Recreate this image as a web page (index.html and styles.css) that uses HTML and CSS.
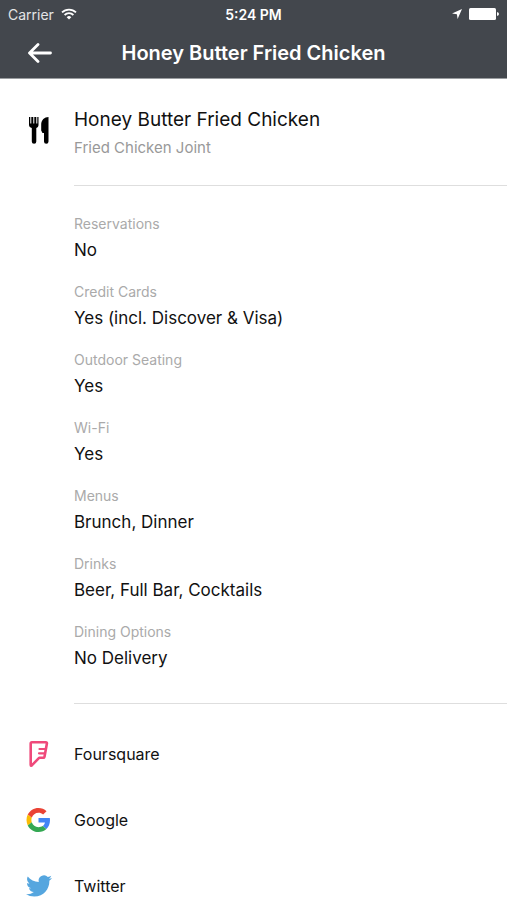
FILE: index.html
```html
<!DOCTYPE html>
<html lang="en">
<head>
<meta charset="utf-8">
<meta name="viewport" content="width=device-width, initial-scale=1">
<title>Honey Butter Fried Chicken</title>
<link rel="stylesheet" href="styles.css">
</head>
<body>
<header class="top">
  <div class="status">
    <div class="status-left">
      <span>Carrier</span>
      <svg width="16" height="12" viewBox="0 0 16 12" fill="none" stroke="#fff" stroke-width="1.8"><path d="M1 4.4a10 10 0 0 1 14 0M3.6 7a6.300 6.300 0 0 1 8.800 0"/><path d="M8 11.500 5.700 9.200a3.300 3.300 0 0 1 4.600 0z" fill="#fff" stroke="none"/></svg>
    </div>
    <span class="time">5:24 PM</span>
    <div class="status-right">
      <svg width="10" height="10" viewBox="0 0 10 10" fill="#fff"><path d="M10 0 5.600 10 4.900 5.200 0 4.400z"/></svg>
      <svg width="30" height="12" viewBox="0 0 30 12" fill="#fff"><rect width="27" height="12" rx="1.500"/><path d="M28 4q2 .3 2 2t-2 2z"/></svg>
    </div>
  </div>
  <div class="nav">
    <button class="back" type="button" aria-label="Back">
      <svg width="24" height="20" viewBox="0 0 24 20" fill="none" stroke="#fff" stroke-width="2.800" stroke-linecap="round" stroke-linejoin="round"><path d="M10 1.500 1.500 10l8.500 8.500M2 10h20.500"/></svg>
    </button>
    <h1>Honey Butter Fried Chicken</h1>
  </div>
</header>
<main>
  <section class="venue">
    <svg class="icon" width="26" height="28" viewBox="0 0 26 28" fill="#000"><path d="M3 1h1.300v6.500h1V1h2v6.500h1V1h2v6.500h1V1h1.200v8c0 1.500-.9 2.500-2.200 3V25.500a2 2 0 0 1-4.500 0V12C4.200 11.500 3 10.500 3 9z"/><path d="M22.500 1v24.500a2.200 2.200 0 0 1-4.500 0V17h-1.500L15.200 14.500V8.500C15.200 4 18.500 1 22.500 1z"/></svg>
    <div>
      <h2>Honey Butter Fried Chicken</h2>
      <p class="kind">Fried Chicken Joint</p>
    </div>
  </section>
  <dl class="facts">
    <div><dt>Reservations</dt><dd>No</dd></div>
    <div><dt>Credit Cards</dt><dd>Yes (incl. Discover &amp; Visa)</dd></div>
    <div><dt>Outdoor Seating</dt><dd>Yes</dd></div>
    <div><dt>Wi-Fi</dt><dd>Yes</dd></div>
    <div><dt>Menus</dt><dd>Brunch, Dinner</dd></div>
    <div><dt>Drinks</dt><dd>Beer, Full Bar, Cocktails</dd></div>
    <div><dt>Dining Options</dt><dd>No Delivery</dd></div>
  </dl>
  <nav class="links" aria-label="Services">
    <a href="#foursquare">
      <svg class="icon" width="26" height="26" viewBox="0 0 26 26" fill="none" stroke="#ef4a7b" stroke-width="2.600" stroke-linejoin="round" stroke-linecap="round"><path d="M5.800 1.300h14q1.300 0 1.100 1.200l-2.400 13.200q-.2 1.100-1.300 1.100h-4.100L6 24.200q-1.300 1.200-1.300-.4V2.400q0-1.100 1.100-1.100z"/><path d="M19.500 8H13.500M18.500 12.300h-5.500" stroke-width="2.200"/></svg>
      <span>Foursquare</span>
    </a>
    <a href="#google">
      <svg class="icon" width="26" height="26" viewBox="-1 -2 52 52"><path fill="#EA4335" d="M24 9.500c3.540 0 6.710 1.220 9.210 3.600l6.850-6.850C35.900 2.380 30.470 0 24 0 14.620 0 6.510 5.380 2.560 13.220l7.980 6.190C12.430 13.720 17.740 9.500 24 9.500z"/><path fill="#4285F4" d="M46.980 24.550c0-1.570-.15-3.090-.38-4.550H24v9.020h12.940c-.58 2.960-2.260 5.480-4.780 7.180l7.730 6c4.510-4.180 7.090-10.360 7.090-17.650z"/><path fill="#FBBC05" d="M10.530 28.590c-.48-1.450-.76-2.990-.76-4.590s.27-3.140.76-4.590l-7.980-6.190C.92 16.460 0 20.120 0 24c0 3.880.92 7.540 2.560 10.780l7.970-6.190z"/><path fill="#34A853" d="M24 48c6.480 0 11.930-2.130 15.890-5.810l-7.730-6c-2.150 1.450-4.920 2.300-8.160 2.300-6.260 0-11.570-4.220-13.470-9.910l-7.980 6.190C6.510 42.620 14.620 48 24 48z"/></svg>
      <span>Google</span>
    </a>
    <a href="#twitter">
      <svg class="icon" width="26" height="26" viewBox="0 0 24 24" fill="#55a6df"><path d="M23.953 4.570a10 10 0 0 1-2.825.775 4.958 4.958 0 0 0 2.163-2.723c-.951.555-2.005.959-3.127 1.184a4.920 4.920 0 0 0-8.384 4.482C7.690 8.095 4.067 6.130 1.640 3.162a4.822 4.822 0 0 0-.666 2.475c0 1.710.87 3.213 2.188 4.096a4.904 4.904 0 0 1-2.228-.616v.060a4.923 4.923 0 0 0 3.946 4.827 4.996 4.996 0 0 1-2.212.085 4.936 4.936 0 0 0 4.604 3.417 9.867 9.867 0 0 1-6.102 2.105c-.390 0-.779-.023-1.170-.067a13.995 13.995 0 0 0 7.557 2.209c9.053 0 13.998-7.496 13.998-13.985 0-.210 0-.420-.015-.630A9.935 9.935 0 0 0 24 4.590z"/></svg>
      <span>Twitter</span>
    </a>
  </nav>
</main>
</body>
</html>
```
FILE: styles.css
```css
* {
  box-sizing: border-box;
}

body,
h1,
h2,
p,
dl,
dd {
  margin: 0;
}

body {
  background: #fff;
  color: #111;
  font-family: Inter, "Liberation Sans", sans-serif;
  font-size: 16px;
}

svg {
  display: block;
  flex: none;
}

.top {
  background: #43474d;
  border-bottom: 1px solid #9a9da0;
  color: #fff;
}

.status {
  display: grid;
  grid-template-columns: 1fr auto 1fr;
  align-items: center;
  height: 28px;
  padding: 0 8px;
  font-size: 14px;
}

.status-left,
.status-right {
  display: flex;
  align-items: center;
  gap: 7px;
}

.status-left {
  color: #e4e5e6;
}

.status-right {
  justify-content: flex-end;
}

.time {
  font-weight: 600;
}

.nav {
  display: grid;
  grid-template-columns: 52px 1fr 52px;
  align-items: center;
  height: 50px;
}

.back {
  display: flex;
  justify-content: flex-end;
  padding: 0;
  border: 0;
  background: none;
}

h1 {
  font-size: 20px;
  font-weight: 600;
  line-height: 24px;
  text-align: center;
}

.venue {
  display: flex;
  align-items: flex-start;
  gap: 22px;
  padding: 27px 0 24px 26px;
}

.venue .icon {
  margin-top: 10px;
}

h2 {
  font-size: 19px;
  font-weight: 400;
  line-height: 28px;
}

.kind {
  color: #999;
  font-size: 15px;
  line-height: 27px;
}

.facts {
  display: flex;
  flex-direction: column;
  gap: 20px;
  margin-left: 74px;
  padding: 28px 0 33px;
  border: solid #dedede;
  border-width: 1px 0;
}

dt {
  color: #aaa;
  font-size: 14px;
  line-height: 20px;
}

dd {
  padding-top: 4px;
  font-size: 17px;
  line-height: 24px;
}

.links {
  padding-top: 17px;
}

.links a {
  display: flex;
  align-items: center;
  gap: 22px;
  padding: 20px 26px;
  color: #111;
  font-size: 16px;
  line-height: 26px;
  text-decoration: none;
}

.links a:last-child {
  padding-bottom: 0;
}
```
